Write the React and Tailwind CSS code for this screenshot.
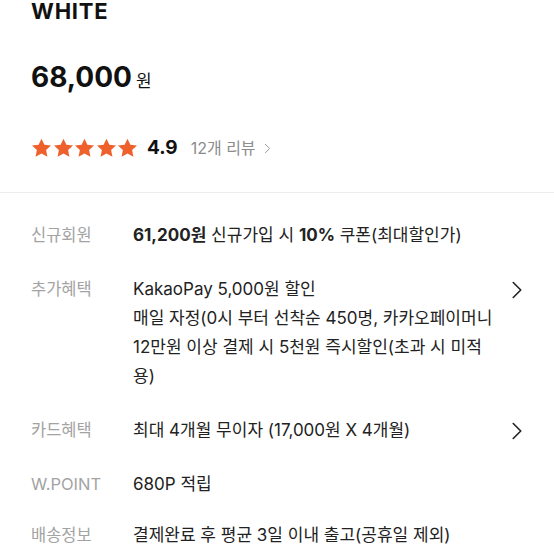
import { ChevronRight } from 'lucide-react';

const font = { fontFamily: '"Inter", "Noto Sans CJK KR", sans-serif' };

const Star = () => (
  <svg width="21" height="20" viewBox="0 0 24 23" className="shrink-0">
    <path
      d="M12 0.8l3.3 7 7.6 0.9-5.6 5.2 1.5 7.6L12 17.7l-6.8 3.8 1.5-7.6L1.1 8.7l7.6-0.9z"
      fill="#ee602c"
    />
  </svg>
);

const Row = ({ label, children, chevron }) => (
  <div className="flex items-start">
    <div className="w-[102px] shrink-0 text-[16.5px] leading-[29px] text-[#a3a3a3]">{label}</div>
    <div className="flex-1 text-[17px] leading-[29px] text-[#222]">{children}</div>
    {chevron && (
      <div className="w-[30px] h-[29px] flex items-center justify-center">
        <ChevronRight size={30} strokeWidth={1.3} className="text-[#222]" />
      </div>
    )}
  </div>
);

export default function App() {
  return (
    <div className="w-[554px] h-[554px] overflow-hidden bg-white" style={font}>
      <div className="pl-[31px]">
        <div className="text-[22px] leading-[23px] font-bold text-[#111] tracking-[0.8px]">WHITE</div>
        <div className="mt-[36px] flex items-baseline">
          <span className="text-[28px] leading-[36px] font-bold text-[#111]">68,000</span>
          <span className="ml-[4px] text-[17px] text-[#111]">원</span>
        </div>
        <div className="mt-[43px] flex items-center h-[20px]">
          <div className="flex gap-[0.5px]">
            <Star />
            <Star />
            <Star />
            <Star />
            <Star />
          </div>
          <span className="ml-[9px] text-[19px] font-bold text-[#111]">4.9</span>
          <span className="ml-[13px] text-[16px] text-[#8c8c8c] flex items-center">
            12개 리뷰
            <ChevronRight size={17} strokeWidth={1.4} className="ml-[3px] text-[#9a9a9a]" />
          </span>
        </div>
      </div>
      <div className="mt-[34px] border-t border-[#ececec]" />
      <div className="pl-[31px] pr-[22px] pt-[28px] flex flex-col gap-[25px]">
        <Row label="신규회원">
          <span className="font-bold">61,200원</span> 신규가입 시 <span className="font-bold">10%</span> 쿠폰(최대할인가)
        </Row>
        <Row label="추가혜택" chevron>
          <div className="whitespace-nowrap">KakaoPay 5,000원 할인</div>
          <div className="whitespace-nowrap">매일 자정(0시 부터 선착순 450명, 카카오페이머니</div>
          <div className="whitespace-nowrap">12만원 이상 결제 시 5천원 즉시할인(초과 시 미적</div>
          <div className="whitespace-nowrap">용)</div>
        </Row>
        <Row label="카드혜택" chevron>
          최대 4개월 무이자 (17,000원 X 4개월)
        </Row>
        <Row label="W.POINT">680P 적립</Row>
        <div className="-mt-[3px]">
          <Row label="배송정보">결제완료 후 평균 3일 이내 출고(공휴일 제외)</Row>
        </div>
      </div>
    </div>
  );
}
